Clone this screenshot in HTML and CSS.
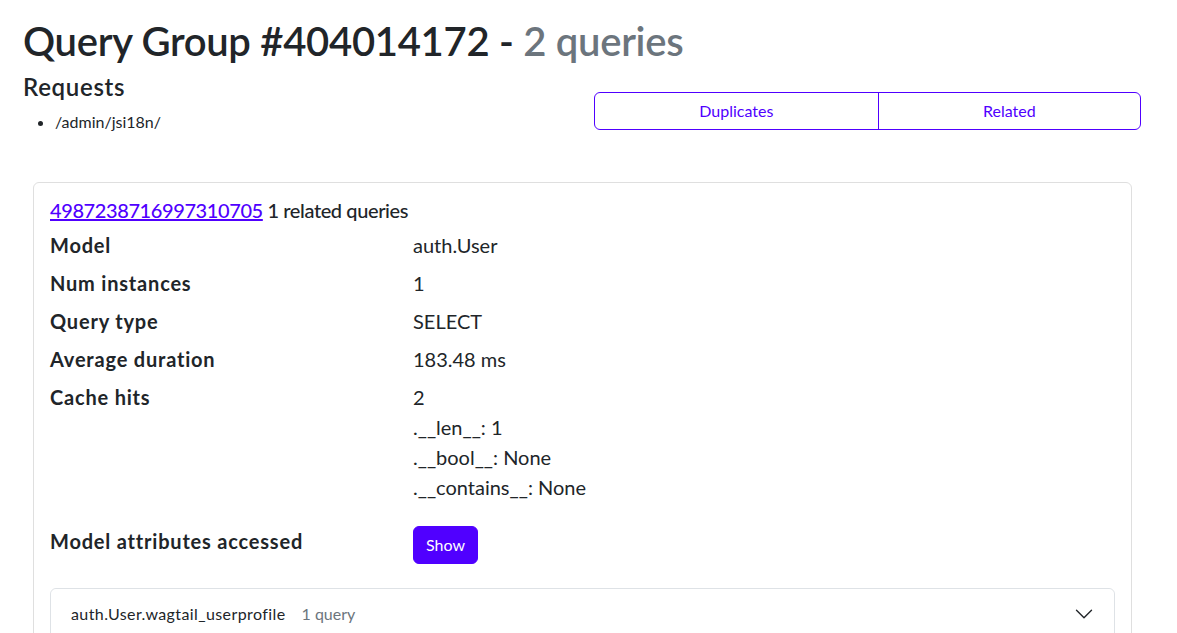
FILE: index.html
```html
<!DOCTYPE html>
<html lang="en">
<head>
<meta charset="utf-8">
<title>Query Group #404014172</title>
<link rel="stylesheet" href="styles.css">
</head>
<body>
<div class="page">
  <h1 class="title">Query Group #404014172 - <span class="muted">2 queries</span></h1>
  <div class="header-row">
    <div class="requests">
      <h4 class="subtitle">Requests</h4>
      <ul class="req-list">
        <li>/admin/jsi18n/</li>
      </ul>
    </div>
    <div class="tabs">
      <a class="tab" href="#">Duplicates</a>
      <a class="tab" href="#">Related</a>
    </div>
  </div>

  <div class="card">
    <h5 class="card-head"><a class="qlink" href="#">4987238716997310705</a> 1 related queries</h5>
    <dl class="details">
      <dt>Model</dt>
      <dd>auth.User</dd>
      <dt>Num instances</dt>
      <dd>1</dd>
      <dt>Query type</dt>
      <dd>SELECT</dd>
      <dt>Average duration</dt>
      <dd>183.48 ms</dd>
      <dt>Cache hits</dt>
      <dd>2
        <ul class="plain">
          <li>.__len__: 1</li>
          <li>.__bool__: None</li>
          <li>.__contains__: None</li>
        </ul>
      </dd>
      <dt>Model attributes accessed</dt>
      <dd><button class="btn-show" type="button">Show</button></dd>
    </dl>
    <div class="accordion">
      <button class="acc-btn" type="button">
        <span class="acc-name">auth.User.wagtail_userprofile</span>
        <span class="acc-count">1 query</span>
        <svg class="chev" viewBox="0 0 16 16" width="20" height="20" aria-hidden="true"><path d="M2 5L8 11L14 5" fill="none" stroke="#212529" stroke-width="1.1" stroke-linecap="round" stroke-linejoin="round"/></svg>
      </button>
    </div>
  </div>
</div>
</body>
</html>
```

FILE: styles.css
```css
* { box-sizing: border-box; }
html, body { margin: 0; padding: 0; background: #fff; }
body {
  font-family: Lato, "Open Sans", "Noto Sans", sans-serif;
  font-size: 16px;
  line-height: 1.5;
  color: #212529;
}
.page {
  padding: 17px 36px 40px 23px;
}
.title {
  margin: 0 0 8px;
  font-size: 40px;
  line-height: 1.2;
  font-weight: 600;
  letter-spacing: -0.3px;
}
.muted { color: #6c757d; }
.header-row {
  display: grid;
  grid-template-columns: 1fr 1fr;
  column-gap: 24px;
  align-items: center;
}
.subtitle {
  margin: 0 0 8px;
  font-size: 24px;
  line-height: 1.2;
  font-weight: 600;
  letter-spacing: 0.7px;
}
.req-list {
  margin: 0 0 16px;
  padding-left: 32px;
}
.tabs {
  display: flex;
  border: 1px solid #5000ff;
  border-radius: 6px;
  overflow: hidden;
}
.tab {
  flex: 1 1 auto;
  text-align: center;
  padding: 6px 12px;
  color: #5000ff;
  text-decoration: none;
  line-height: 24px;
}
.tab + .tab { border-left: 1px solid #5000ff; }
.card {
  margin: 32px 9px 0 10px;
  border: 1px solid #dfdfdf;
  border-radius: 6px;
  padding: 15px 16px 0;
}
.card-head {
  margin: 0 0 8px;
  font-size: 20px;
  line-height: 1.2;
  font-weight: 500;
  letter-spacing: -0.4px;
}
.qlink { color: #5000ff; text-decoration: underline; }
.details {
  display: grid;
  grid-template-columns: calc(33.333% - 16px) 1fr;
  column-gap: 24px;
  margin: 0;
  font-size: 20px;
  line-height: 30px;
}
.details dt { font-weight: 700; margin: 0 0 8px; letter-spacing: 0.8px; }
.details dd { margin: 0 0 8px; }
.plain { list-style: none; padding: 0; margin: 0 0 16px; }
.btn-show {
  font: inherit;
  font-size: 16px;
  line-height: 24px;
  padding: 6px 12px;
  border: 1px solid #5000ff;
  background: #5000ff;
  color: #fff;
  border-radius: 6px;
}
.accordion {
  margin-top: 16px;
  border: 1px solid #dee2e6;
  border-radius: 6px;
}
.acc-btn {
  display: flex;
  align-items: center;
  width: 100%;
  padding: 13px 20px 19px;
  background: #fff;
  border: 0;
  border-radius: 6px;
  font: inherit;
  font-size: 16px;
  line-height: 24px;
  letter-spacing: 0.4px;
  color: #212529;
  text-align: left;
}
.acc-count {
  margin-left: 16px;
  font-size: 16px;
  letter-spacing: 0;
  color: #6c757d;
}
.chev { margin-left: auto; }
```
